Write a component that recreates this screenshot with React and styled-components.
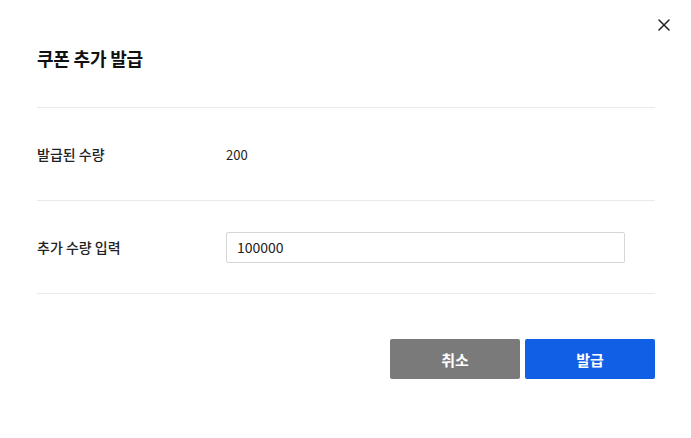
import React from "react";
import styled, { createGlobalStyle } from "styled-components";

const Global = createGlobalStyle`
  html, body { margin: 0; padding: 0; background: #ffffff; }
  body { font-family: "Noto Sans CJK KR", "Noto Sans", sans-serif; color: #111; }
`;

const Modal = styled.div`
  position: relative;
  width: 691px;
  height: 438px;
  box-sizing: border-box;
  padding: 0 36px 0 37px;
  background: #fff;
`;

const CloseButton = styled.button`
  position: absolute;
  top: 15px;
  right: 17px;
  width: 20px;
  height: 20px;
  padding: 0;
  border: 0;
  background: none;
  display: flex;
  align-items: center;
  justify-content: center;
  cursor: pointer;
`;

const Header = styled.div`
  height: 108px;
  box-sizing: border-box;
  padding-top: 46px;
  border-bottom: 1px solid #e9e9e9;
`;

const Title = styled.h2`
  margin: 0;
  font-size: 18px;
  line-height: 24px;
  font-weight: 700;
  color: #111;
  letter-spacing: -0.2px;
`;

const Row = styled.div`
  display: flex;
  align-items: center;
  height: 93px;
  box-sizing: border-box;
  border-bottom: 1px solid #e9e9e9;
`;

const Label = styled.div`
  width: 189px;
  flex-shrink: 0;
  font-size: 14px;
  font-weight: 500;
  color: #222;
`;

const Value = styled.div`
  font-size: 13px;
  color: #222;
`;

const Input = styled.input`
  width: 399px;
  height: 31px;
  box-sizing: border-box;
  border: 1px solid #d6d6d6;
  border-radius: 2px;
  padding: 0 10px;
  font-family: inherit;
  font-size: 14px;
  color: #222;
  outline: none;
`;

const Footer = styled.div`
  display: flex;
  justify-content: flex-end;
  gap: 5px;
  padding-top: 45px;
`;

const Button = styled.button`
  width: 130px;
  height: 40px;
  border: 0;
  border-radius: 2px;
  background: ${(p) => (p.$primary ? "#115fe4" : "#7a7a7a")};
  color: #fff;
  font-family: inherit;
  font-size: 15px;
  font-weight: 700;
  cursor: pointer;
`;

export default function App() {
  return (
    <>
      <Global />
      <Modal>
        <CloseButton aria-label="닫기">
          <svg width="12" height="12" viewBox="0 0 12 12">
            <path d="M1 1L11 11M11 1L1 11" stroke="#222" strokeWidth="1.5" strokeLinecap="round" />
          </svg>
        </CloseButton>
        <Header>
          <Title>쿠폰 추가 발급</Title>
        </Header>
        <Row>
          <Label>발급된 수량</Label>
          <Value>200</Value>
        </Row>
        <Row>
          <Label>추가 수량 입력</Label>
          <Input defaultValue="100000" />
        </Row>
        <Footer>
          <Button>취소</Button>
          <Button $primary>발급</Button>
        </Footer>
      </Modal>
    </>
  );
}
